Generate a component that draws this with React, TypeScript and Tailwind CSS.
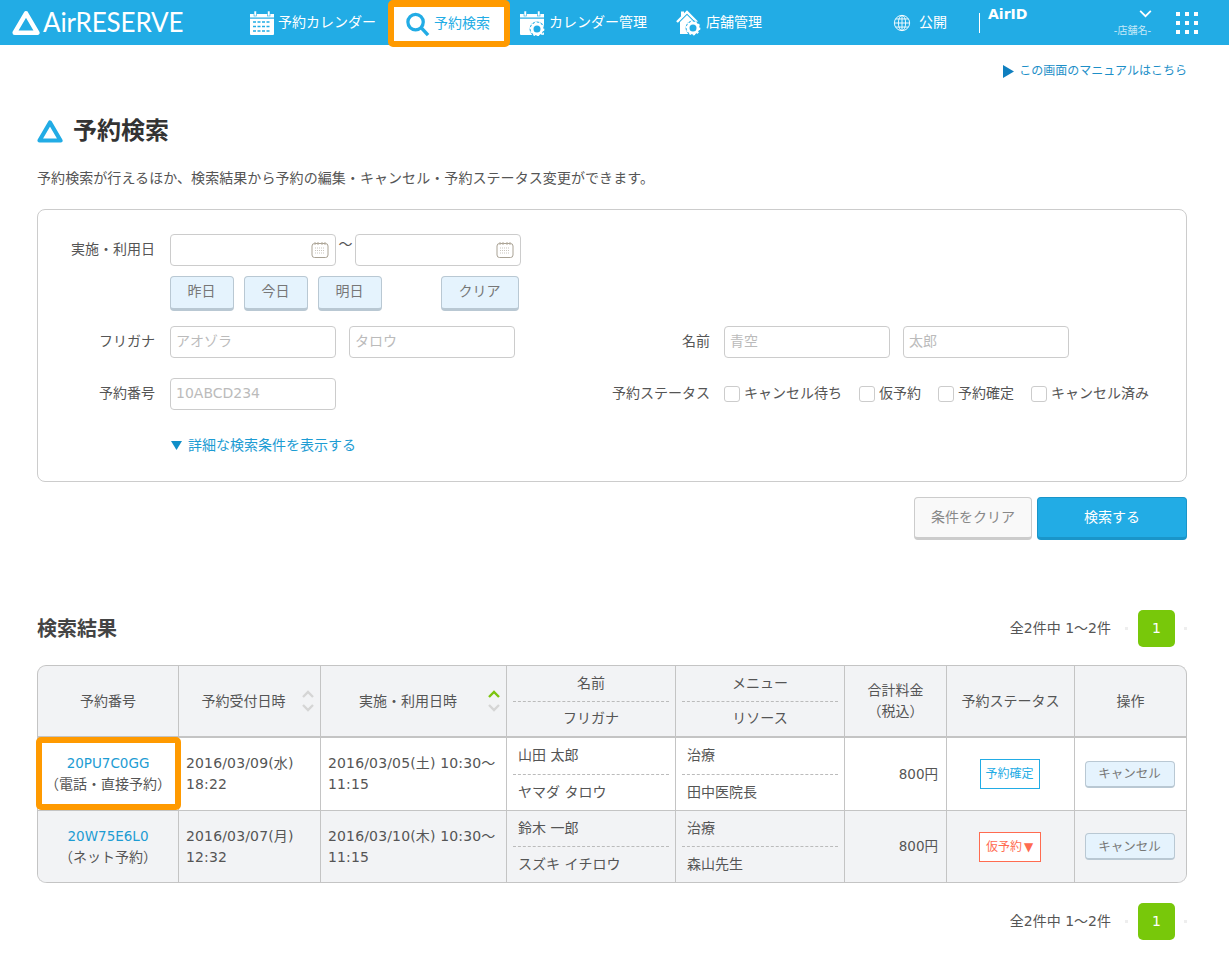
import React from "react";

const Tri = ({ className }: { className: string }) => (
  <svg viewBox="0 0 26 24" className={className} fill="none" stroke="currentColor" strokeWidth="4.2" strokeLinejoin="round">
    <path d="M13 3 L23.5 21 H2.5 Z" />
  </svg>
);

const CalIcon = ({ gear }: { gear?: boolean }) => (
  <svg viewBox="0 0 26 26" className="w-[26px] h-[26px] shrink-0">
    <path d="M1 4 H25 V24 a1 1 0 0 1 -1 1 H2 a1 1 0 0 1 -1 -1 Z" fill="#fff" />
    <rect x="5" y="1" width="2.5" height="5" fill="#fff" stroke="#22ace5" strokeWidth="0.6" />
    <rect x="18.5" y="1" width="2.5" height="5" fill="#fff" stroke="#22ace5" strokeWidth="0.6" />
    <rect x="1" y="7.5" width="24" height="1.2" fill="#22ace5" />
    {!gear && (
      <g stroke="#22ace5" strokeWidth="1.6" strokeDasharray="3 1.5">
        <path d="M4 12 H22" />
        <path d="M4 16.5 H22" />
        <path d="M4 21 H22" />
      </g>
    )}
    {gear && (
      <g>
        <circle cx="18" cy="19" r="7.5" fill="#22ace5" />
        <circle cx="18" cy="19" r="5" fill="none" stroke="#fff" strokeWidth="3" />
        <circle cx="18" cy="19" r="6.6" fill="none" stroke="#fff" strokeWidth="1.6" strokeDasharray="2 2.1" />
      </g>
    )}
  </svg>
);

const HouseIcon = () => (
  <svg viewBox="0 0 26 26" className="w-[26px] h-[26px] shrink-0">
    <path d="M1 12 L11 2 L21 12" fill="none" stroke="#fff" strokeWidth="2.4" />
    <path d="M4 12 L11 5 L18 12 V24 H4 Z" fill="#fff" />
    <rect x="5" y="1.5" width="3" height="5" fill="#fff" />
    <circle cx="17" cy="18" r="7.5" fill="#22ace5" />
    <circle cx="17" cy="18" r="5" fill="none" stroke="#fff" strokeWidth="3" />
    <circle cx="17" cy="18" r="6.6" fill="none" stroke="#fff" strokeWidth="1.6" strokeDasharray="2 2.1" />
  </svg>
);

const Globe = () => (
  <svg viewBox="0 0 20 20" className="w-[18px] h-[18px]" fill="none" stroke="#fff" strokeWidth="1">
    <circle cx="10" cy="10" r="8.5" />
    <ellipse cx="10" cy="10" rx="4" ry="8.5" />
    <path d="M10 1.5 V18.5 M1.5 10 H18.5 M3 5.5 H17 M3 14.5 H17" />
  </svg>
);

const MiniCal = () => (
  <svg viewBox="0 0 18 18" className="w-[18px] h-[18px]" fill="none">
    <rect x="1" y="2.5" width="16" height="14" rx="2.5" fill="#fff" stroke="#a9a294" />
    <path d="M4 1 V4 M7 1 V4 M11 1 V4 M14 1 V4" stroke="#b5ad9f" />
    <path d="M4 7 H14 M4 9.5 H14 M4 12 H14" stroke="#c9c5bd" strokeDasharray="1 1" />
  </svg>
);

const Input = ({ ph, cal }: { ph?: string; cal?: boolean }) => (
  <div className="w-[166px] h-[32px] border border-[#ccc] rounded-[4px] bg-white flex items-center justify-between pl-[5px] pr-[6px] text-[14px] text-[#bbb]">
    <span className="pb-[2px]">{ph}</span>
    {cal && <MiniCal />}
  </div>
);

const SoftBtn = ({ children, w }: { children: React.ReactNode; w: string }) => (
  <div className={`${w} h-[35px] flex items-center justify-center pb-[2px] pr-[1px] bg-[#e5f3fd] border border-[#b9c8d3] border-b-[3px] rounded-[4px] text-[14px] text-[#777]`}>
    {children}
  </div>
);

const Check = ({ label }: { label: string }) => (
  <div className="flex items-center gap-[4px]">
    <span className="w-[16px] h-[16px] border border-[#ccc] rounded-[3px] bg-white" />
    <span className="pb-[2px]">{label}</span>
  </div>
);

const Pager = () => (
  <div className="flex items-center justify-end text-[14px] text-[#555]">
    <span>全2件中 1〜2件</span>
    <span className="w-[3px] h-[3px] bg-[#eee] ml-[14px]" />
    <span className="w-[37px] h-[37px] ml-[10px] rounded-[5px] bg-[#78c80a] text-white flex items-center justify-center text-[14px]">1</span>
    <span className="w-[3px] h-[3px] bg-[#eee] ml-[9px]" />
  </div>
);

const Sort = ({ up }: { up?: boolean }) => (
  <svg viewBox="0 0 14 26" className="w-[14px] h-[26px] shrink-0" fill="none" strokeWidth="2.4">
    <path d="M2 9 L7 4 L12 9" stroke={up ? "#7cc40f" : "#d5d5d5"} />
    <path d="M2 17 L7 22 L12 17" stroke="#d5d5d5" />
  </svg>
);

const Two = ({ a, b }: { a: string; b: string }) => (
  <div className="flex flex-col h-full px-[6px]">
    <div className="flex-1 flex items-center px-[5px] border-b border-dashed border-[#bbb]">{a}</div>
    <div className="flex-1 flex items-center px-[5px]">{b}</div>
  </div>
);

const Th2 = ({ a, b }: { a: string; b: string }) => (
  <div className="flex flex-col h-full px-[6px] border-r border-[#c4c4c4] text-center">
    <div className="flex-1 flex items-center justify-center border-b border-dashed border-[#bbb]">{a}</div>
    <div className="flex-1 flex items-center justify-center">{b}</div>
  </div>
);

const cols = "grid grid-cols-[141px_142px_186px_169px_169px_102px_128px_1fr]";
const cell = "border-r border-[#c4c4c4]";
const dateCell = `${cell} flex items-center px-[7px] leading-[21px] text-[14px] tracking-[0.15px]`;

const Row = ({ r, cls }: { r: any; cls: string }) => (
  <div className={`${cols} ${cls} text-[14px] text-[#555]`}>
    <div className={`${cell} relative flex flex-col items-center justify-center leading-[21px]`}>
      <span className="text-[#1d9cd3] text-[13.5px]">{r.id}</span>
      <span>{r.kind}</span>
      {r.hi && <span className="absolute left-[-2px] right-[-3px] top-[-1px] bottom-[0px] border-[6px] border-[#ff9a00] rounded-[5px]" />}
    </div>
    <div className={dateCell}><span>{r.rec}<br />{r.recT}</span></div>
    <div className={dateCell}><span>{r.use}<br />11:15</span></div>
    <div className={cell}><Two a={r.n} b={r.k} /></div>
    <div className={cell}><Two a={r.m} b={r.s} /></div>
    <div className={`${cell} flex items-center justify-end pr-[8px] text-[13.5px]`}>800円</div>
    <div className={`${cell} flex items-center justify-center pr-[2px]`}>{r.status}</div>
    <div className="flex items-center justify-center pr-[2px]">
      <div className="w-[90px] h-[27px] flex items-center justify-center pt-[2px] bg-[#e5f3fd] border border-[#b9c8d3] border-b-[2px] rounded-[4px] text-[12.5px] text-[#777]">キャンセル</div>
    </div>
  </div>
);

const rows = [
  {
    id: "20PU7C0GG", kind: "（電話・直接予約）", rec: "2016/03/09(水)", recT: "18:22", use: "2016/03/05(土) 10:30〜",
    n: "山田 太郎", k: "ヤマダ タロウ", m: "治療", s: "田中医院長", hi: true,
    status: <span className="w-[60px] h-[30px] border border-[#22ace5] bg-white text-[#22ace5] text-[12px] flex items-center justify-center">予約確定</span>,
  },
  {
    id: "20W75E6L0", kind: "（ネット予約）", rec: "2016/03/07(月)", recT: "12:32", use: "2016/03/10(木) 10:30〜",
    n: "鈴木 一郎", k: "スズキ イチロウ", m: "治療", s: "森山先生",
    status: <span className="w-[62px] h-[30px] border border-[#ff6b50] bg-white text-[#ff6b50] text-[12px] flex items-center justify-center gap-[2px]"><span>仮予約</span><span>▼</span></span>,
  },
];

export default function App() {
  return (
    <div className="min-h-[959px] bg-white text-[#555] font-['DejaVu_Sans','Noto_Sans_CJK_JP',sans-serif]">
      <header className="h-[45px] bg-[#22ace5] flex items-start text-white text-[14px]">
        <div className="flex items-center h-[45px] pl-[12px] w-[249px] shrink-0">
          <Tri className="w-[28px] h-[26px] text-white" />
          <span className="ml-[3px] text-[26px] tracking-[-0.15px] font-['Lato',sans-serif]">AirRESERVE</span>
        </div>
        <div className="flex items-center h-[45px] w-[127px] shrink-0">
          <CalIcon />
          <span className="ml-[3px]">予約カレンダー</span>
        </div>
        <div className="relative z-10 ml-[12px] w-[122px] h-[47px] border-[6px] border-t-[7px] border-[#ff9a00] rounded-[5px] bg-white flex items-center pl-[11px] text-[#22ace5] shrink-0">
          <svg viewBox="0 0 26 26" className="w-[25px] h-[25px] shrink-0" fill="none" stroke="#22ace5">
            <circle cx="11" cy="10.5" r="8" strokeWidth="3.4" />
            <path d="M17 16.5 L24 24" strokeWidth="3.6" />
          </svg>
          <span className="ml-[4px] pb-[2px]">予約検索</span>
        </div>
        <div className="flex items-center h-[45px] ml-[9px] w-[157px] shrink-0">
          <CalIcon gear />
          <span className="ml-[4px]">カレンダー管理</span>
        </div>
        <div className="flex items-center h-[45px] w-[217px] shrink-0">
          <HouseIcon />
          <span className="ml-[4px]">店舗管理</span>
        </div>
        <div className="flex items-center h-[45px] w-[86px] shrink-0">
          <Globe />
          <span className="ml-[8px]">公開</span>
        </div>
        <div className="w-px h-[20px] bg-white mt-[13px] shrink-0" />
        <span className="ml-[8px] mt-[4px] text-[14px] font-bold w-[117px] shrink-0">AirID</span>
        <div className="flex flex-col items-end w-[48px] pt-[10px] shrink-0">
          <svg viewBox="0 0 14 9" className="w-[13px] h-[8px] mr-[1px]" fill="none" stroke="#fff" strokeWidth="2"><path d="M1 1 L7 7 L13 1" /></svg>
          <span className="text-[10px] text-[#c7e9f8] mt-[6px] leading-[14px] pr-[2px]">-店舗名-</span>
        </div>
        <div className="grid grid-cols-3 gap-[5px] ml-[23px] mt-[12px] w-[22px] shrink-0">
          {Array.from({ length: 9 }).map((_, i) => <span key={i} className="w-[4px] h-[4px] bg-white" />)}
        </div>
      </header>

      <main className="pl-[37px] pr-[42px] w-[1229px]">
        <div className="flex justify-end items-center text-[12px] text-[#1d8fc8] h-[52px]">
          <svg viewBox="0 0 11 13" className="w-[11px] h-[13px] mr-[5px]"><path d="M0 0 L11 6.5 L0 13 Z" fill="#0f7fbf" /></svg>
          この画面のマニュアルはこちら
        </div>

        <div className="flex items-center mt-[20px] h-[28px]">
          <Tri className="w-[26px] h-[25px] text-[#22ace5]" />
          <h1 className="ml-[10px] text-[24px] font-bold text-[#333]">予約検索</h1>
        </div>

        <p className="mt-[23px] text-[14px] tracking-[0.07px] leading-[20px]">予約検索が行えるほか、検索結果から予約の編集・キャンセル・予約ステータス変更ができます。</p>

        <section className="mt-[21px] h-[273px] border border-[#ccc] rounded-[8px] pt-[24px] text-[14px]">
          <div className="flex items-start">
            <label className="w-[117px] text-right h-[32px] leading-[30px]">実施・利用日</label>
            <div className="ml-[15px]">
              <div className="flex items-start">
                <Input cal />
                <span className="w-[19px] text-center leading-[20px]">〜</span>
                <Input cal />
              </div>
              <div className="flex gap-[10px] mt-[10px]">
                <SoftBtn w="w-[64px]">昨日</SoftBtn>
                <SoftBtn w="w-[64px]">今日</SoftBtn>
                <SoftBtn w="w-[64px]">明日</SoftBtn>
                <div className="ml-[49px]"><SoftBtn w="w-[78px]">クリア</SoftBtn></div>
              </div>
            </div>
          </div>
          <div className="flex items-center mt-[15px]">
            <label className="w-[117px] text-right pb-[2px]">フリガナ</label>
            <div className="ml-[15px]"><Input ph="アオゾラ" /></div>
            <div className="ml-[13px]"><Input ph="タロウ" /></div>
            <label className="w-[195px] text-right pb-[2px]">名前</label>
            <div className="ml-[14px]"><Input ph="青空" /></div>
            <div className="ml-[13px]"><Input ph="太郎" /></div>
          </div>
          <div className="flex items-center mt-[20px]">
            <label className="w-[117px] text-right pb-[2px]">予約番号</label>
            <div className="ml-[15px]"><Input ph="10ABCD234" /></div>
            <label className="w-[374px] text-right pb-[2px]">予約ステータス</label>
            <div className="ml-[14px] flex items-center gap-[17px]">
              <Check label="キャンセル待ち" />
              <Check label="仮予約" />
              <Check label="予約確定" />
              <Check label="キャンセル済み" />
            </div>
          </div>
          <div className="flex items-center ml-[133px] mt-[25px] text-[14px] text-[#1d9cd3] leading-[20px]">
            <svg viewBox="0 0 11 9" className="w-[11px] h-[9px] mr-[6px]"><path d="M0 0 H11 L5.5 9 Z" fill="#0f8fc8" /></svg>
            詳細な検索条件を表示する
          </div>
        </section>

        <div className="flex justify-end gap-[5px] mt-[15px]">
          <div className="w-[118px] h-[43px] bg-[#f9f9f9] border border-[#ccc] border-b-[3px] rounded-[4px] flex items-center justify-center text-[14px] text-[#888]">条件をクリア</div>
          <div className="w-[150px] h-[43px] bg-[#22ace5] border border-[#1a95c9] border-b-[3px] rounded-[4px] flex items-center justify-center text-[14px] text-white">検索する</div>
        </div>

        <div className="flex items-center justify-between mt-[70px] h-[37px]">
          <h2 className="text-[20px] font-bold text-[#444]">検索結果</h2>
          <Pager />
        </div>

        <div className="mt-[18px] border-x border-t border-[#c4c4c4] rounded-[9px] bg-[#f2f3f5]">
          <div className={`${cols} h-[72px] border-b-2 border-[#c4c4c4] text-[14px] text-[#555]`}>
            <div className={`${cell} flex items-center justify-center`}>予約番号</div>
            <div className={`${cell} flex items-center pl-[7px] pr-[5px]`}>
              <span className="flex-1 text-center">予約受付日時</span><Sort />
            </div>
            <div className={`${cell} flex items-center pl-[8px] pr-[5px]`}>
              <span className="flex-1 text-center">実施・利用日時</span><Sort up />
            </div>
            <Th2 a="名前" b="フリガナ" />
            <Th2 a="メニュー" b="リソース" />
            <div className={`${cell} flex items-center justify-center text-center leading-[21px]`}>合計料金<br />（税込）</div>
            <div className={`${cell} flex items-center justify-center`}>予約ステータス</div>
            <div className="flex items-center justify-center">操作</div>
          </div>
          <Row r={rows[0]} cls="h-[73px] bg-white border-b border-[#c4c4c4]" />
          <div className="rounded-b-[9px] border-b border-[#c4c4c4] overflow-hidden">
            <Row r={rows[1]} cls="h-[71px] bg-[#f2f3f5]" />
          </div>
        </div>

        <div className="mt-[20px]"><Pager /></div>
      </main>
    </div>
  );
}
